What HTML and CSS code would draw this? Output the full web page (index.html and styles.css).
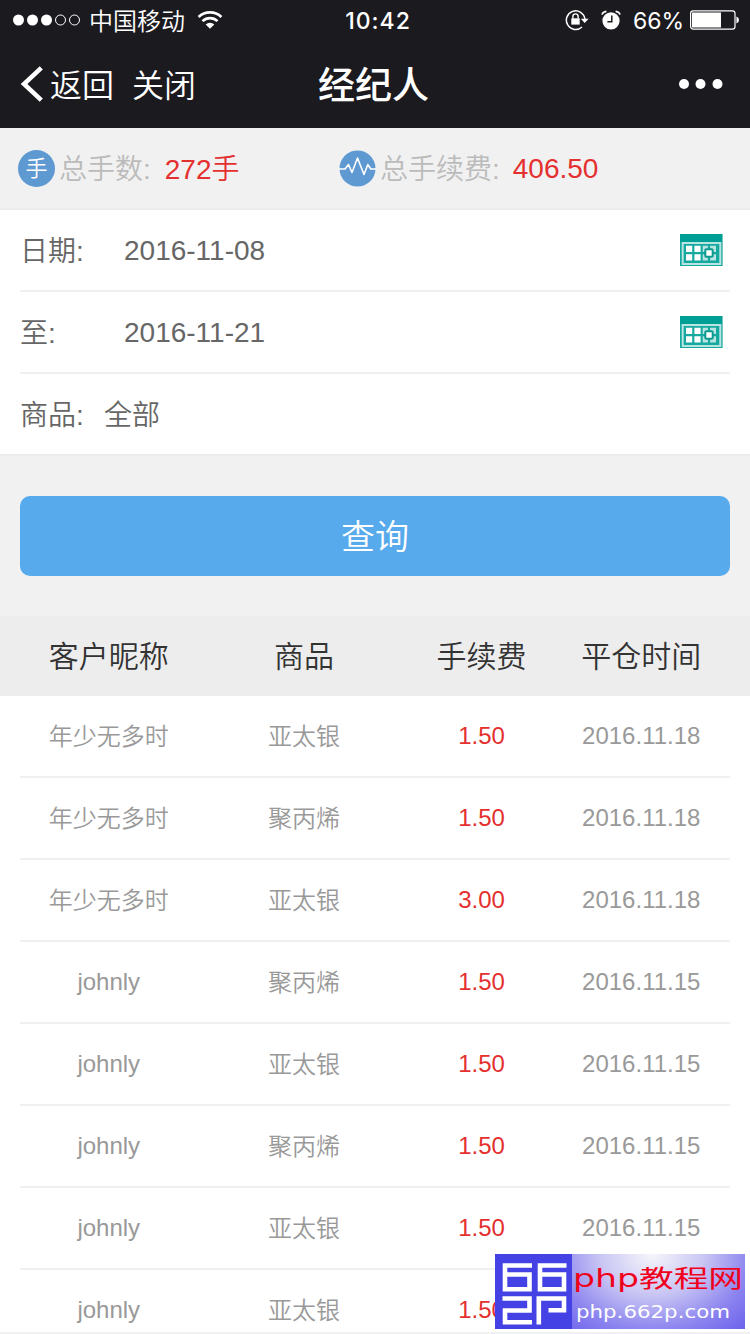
FILE: index.html
```html
<!DOCTYPE html>
<html lang="zh-CN">
<head>
  <meta charset="UTF-8" />
  <meta name="viewport" content="width=device-width, initial-scale=1.0"/>
  <title>经纪人</title>
  <link rel="stylesheet" href="styles.css">
</head>
<body>

<!-- Top bars -->
<header>
  <div class="status-bar">
    <div class="status-left">
      <svg class="signal" width="70" height="14" viewBox="0 0 70 14">
        <g fill="#fff">
          <circle cx="6.5" cy="7" r="5.5"/>
          <circle cx="20.5" cy="7" r="5.5"/>
          <circle cx="34.5" cy="7" r="5.5"/>
        </g>
        <g fill="none" stroke="#fff">
          <circle cx="48.5" cy="7" r="5"/>
          <circle cx="62.5" cy="7" r="5"/>
        </g>
      </svg>
      <span class="carrier">中国移动</span>
      <svg class="wifi" width="26" height="20" viewBox="0 0 26 20">
        <g fill="none" stroke="#fff" stroke-width="2.7">
          <path d="M1.6 6.9a16.5 16.5 0 0 1 22.8 0"/>
          <path d="M5.5 11.1a10.8 10.8 0 0 1 15 0"/>
        </g>
        <path fill="#fff" d="M8.7 14.4a6.2 6.2 0 0 1 8.6 0L13 18.8z"/>
      </svg>
    </div>
    <span class="clock">10:42</span>
    <div class="status-right">
      <svg class="lock" width="24" height="22" viewBox="0 0 24 22">
        <path fill="none" stroke="#fff" stroke-width="1.5" d="M17 18A9.3 9.3 0 1 1 19.9 10"/>
        <path fill="#fff" d="M15.8 9.7h7.8L19.7 14z"/>
        <path fill="#fff" d="M6.3 9.3h8.4v6.3H6.3z"/>
        <path fill="none" stroke="#fff" stroke-width="1.4" d="M7.9 9.6V7.5a2.6 2.6 0 0 1 5.2 0v2.1"/>
      </svg>
      <svg class="alarm" width="20" height="20" viewBox="0 0 20 20">
        <circle cx="10" cy="10.8" r="8.6" fill="#fff"/>
        <path fill="none" stroke="#fff" stroke-width="1.6" d="M1 4.6Q1.8 1.8 5.4 1.4M19 4.6Q18.2 1.8 14.6 1.4"/>
        <path fill="none" stroke="#1b1a1f" stroke-width="1.5" d="M10.8 5.6v6.2H6.4"/>
      </svg>
      <span class="percent">66%</span>
      <svg class="battery" width="50" height="20" viewBox="0 0 50 20">
        <rect x=".6" y=".9" width="44.4" height="18.2" rx="2.6" fill="none" stroke="#fff" stroke-width="1.2"/>
        <path fill="#fff" d="M2 2.6h29v14.8H2zM46.4 6.6q2.6.6 2.6 3.4t-2.6 3.4z"/>
      </svg>
    </div>
  </div>
  <div class="nav-bar">
    <div class="nav-left">
      <svg width="24" height="36" viewBox="0 0 24 36">
        <path fill="none" stroke="#fff" stroke-width="4.500" d="M22.300 1.800L5 18l17.300 16.200"/>
      </svg>
      <a class="back">返回</a>
      <a class="close">关闭</a>
    </div>
    <h1>经纪人</h1>
    <svg class="more" width="44" height="10" viewBox="0 0 44 10">
      <g fill="#fff">
        <circle cx="5" cy="5" r="5"/>
        <circle cx="21.5" cy="5" r="5"/>
        <circle cx="38.5" cy="5" r="5"/>
      </g>
    </svg>
  </div>
</header>

<!-- Totals -->
<div class="summary">
  <div class="total">
    <span class="hand-icon">手</span>
    <span class="label">总手数:</span>
    <span class="value hands">272手</span>
  </div>
  <div class="total">
    <svg class="wave-icon" width="37" height="37" viewBox="0 0 37 37">
      <circle cx="18.5" cy="18.500" r="18" fill="#5e99d2"/>
      <path fill="none" stroke="#fff" stroke-width="1.600" stroke-linejoin="round" d="M0 19h6l3.500-4.500 3.500 8 5.500-14.500L25 24.500l3.800-10 3 4.500H37"/>
    </svg>
    <span class="label">总手续费:</span>
    <span class="value">406.50</span>
  </div>
</div>

<!-- Filter form -->
<div class="filters">
  <div class="field">
    <span class="name">日期:</span>
    <span class="date">2016-11-08</span>
    <svg class="calendar" width="43" height="32" viewBox="0 0 43 32"><use href="#cal"/></svg>
  </div>
  <div class="field">
    <span class="name">至:</span>
    <span class="date">2016-11-21</span>
    <svg class="calendar" width="43" height="32" viewBox="0 0 43 32"><use href="#cal"/></svg>
  </div>
  <div class="field">
    <span class="name">商品:</span>
    <span class="goods">全部</span>
  </div>
</div>

<button class="query">查询</button>

<!-- Records -->
<div class="table-head row">
  <span>客户昵称</span><span>商品</span><span>手续费</span><span>平仓时间</span>
</div>
<div class="records" id="records"></div>

<!-- Site badge -->
<div class="badge">
  <svg class="badge-logo" width="77" height="75" viewBox="0 0 77 75">
    <g fill="none" stroke="#fff" stroke-width="4.600">
      <path d="M37 11.500H10V35.200H34.500V20.500H10"/>
      <path d="M71.500 11.500H45V35.200H69V20.500H45"/>
      <path d="M7.500 44.500H34.500V56.500H10V68.300H37"/>
      <path d="M43.800 70.500V44.500H69V56.300H53.500"/>
    </g>
  </svg>
  <div class="badge-text">
    <svg width="173" height="75" viewBox="0 0 173 75">
      <text class="badge-title" x="1" y="33" textLength="170" lengthAdjust="spacingAndGlyphs">php教程网</text>
      <text class="badge-url" x="4" y="64" textLength="154" lengthAdjust="spacingAndGlyphs">php.662p.com</text>
    </svg>
  </div>
</div>

<svg class="defs" width="0" height="0">
  <symbol id="cal" viewBox="0 0 43 32">
    <path fill="#76c9c3" d="M0 0h43v32H0z"/>
    <path fill="#009f95" d="M0 0h42v8H0z"/>
    <path fill="#16a99f" d="M0 8h42v24H0z"/>
    <path fill="none" stroke="#b8e5e1" stroke-width="2" d="M2.700 9h37.600v21H2.700z"/>
    <path fill="#fff" d="M6 11.700h6.200v6.300H6zM14.400 11.700h6.200v6.300h-6.200zM6 20.300h6.200v6.300H6zM14.400 20.300h6.200v6.300h-6.200z"/>
    <path fill="#b8e5e1" d="M22.700 11.700h5.200v6.300h-5.200zM30.100 11.700h5.900v6.300h-5.900zM22.700 20.300h5.200v6.300h-5.200zM30.100 20.300h5.900v6.300h-5.900z"/>
    <rect x="25.300" y="15.300" width="7.400" height="7.400" rx="1" fill="#fff" stroke="#0c9a90" stroke-width="2"/>
  </symbol>
</svg>

<script>
  const records = [
    { name: "年少无多时", goods: "亚太银", fee: "1.50", date: "2016.11.18" },
    { name: "年少无多时", goods: "聚丙烯", fee: "1.50", date: "2016.11.18" },
    { name: "年少无多时", goods: "亚太银", fee: "3.00", date: "2016.11.18" },
    { name: "johnly", goods: "聚丙烯", fee: "1.50", date: "2016.11.15" },
    { name: "johnly", goods: "亚太银", fee: "1.50", date: "2016.11.15" },
    { name: "johnly", goods: "聚丙烯", fee: "1.50", date: "2016.11.15" },
    { name: "johnly", goods: "亚太银", fee: "1.50", date: "2016.11.15" },
    { name: "johnly", goods: "亚太银", fee: "1.50", date: "" },
  ];

  // Chinese glyphs sit lower in the line than latin ones
  const cell = text => `<span class="${/[\u4e00-\u9fff]/.test(text) ? "zh" : ""}">${text}</span>`;

  document.getElementById("records").innerHTML = records.map(r => `
    <div class="row record">
      ${cell(r.name)}${cell(r.goods)}<span class="fee">${r.fee}</span>${cell(r.date)}
    </div>
  `).join("");
</script>

</body>
</html>
```
FILE: styles.css
```css
:root {
  --red: #e4302f;
  --line: #f0f0f0;
}

* {
  box-sizing: border-box;
}

body {
  margin: 0;
  height: 1334px;
  overflow: hidden;
  display: flex;
  flex-direction: column;
  position: relative;
  background: #f1f1f1;
  font-family: "Liberation Sans", "Noto Sans CJK SC", sans-serif;
  font-weight: 350;
}

svg {
  display: block;
  flex: none;
}

header {
  height: 128px;
  flex: none;
  background: #1b1a1f;
  color: #fff;
}

.status-bar {
  height: 40px;
  display: grid;
  grid-template-columns: 1fr auto 1fr;
  align-items: center;
  padding: 0 10px 0 12px;
}

.status-left,
.status-right {
  display: flex;
  align-items: center;
}

.status-right {
  justify-content: flex-end;
}

.carrier {
  margin-left: 7px;
  padding-top: 3px;
  font-size: 24px;
  line-height: 37px;
}

.wifi {
  margin-left: 12px;
}

.clock {
  padding: 1px 0 0 4px;
  font-family: Inter, sans-serif;
  font-size: 23px;
  font-weight: 500;
  letter-spacing: 1px;
}

.alarm {
  margin: 0 12px;
}

.percent {
  padding-top: 1px;
  font-family: Inter, sans-serif;
  font-size: 23px;
  font-weight: 400;
  margin-right: 6px;
}

.nav-bar {
  height: 88px;
  display: grid;
  grid-template-columns: 1fr auto 1fr;
  align-items: center;
  padding: 0 27px 0 19px;
}

.nav-left {
  display: flex;
  align-items: center;
  font-size: 32px;
}

.back,
.close {
  padding-bottom: 2px;
}

.back {
  margin-left: 7px;
}

.close {
  margin-left: 18px;
}

h1 {
  margin: 0;
  padding: 0 0 3px 5px;
  font-size: 37px;
  font-weight: 500;
}

.more {
  justify-self: end;
}

.summary {
  height: 82px;
  flex: none;
  display: grid;
  grid-template-columns: 321px 1fr;
  padding-left: 18px;
  border-bottom: 2px solid #ececec;
  font-size: 28px;
}

.total {
  display: flex;
  align-items: center;
}

.hand-icon {
  width: 37px;
  height: 37px;
  border-radius: 50%;
  background: #5e99d2;
  color: #fff;
  font-size: 22px;
  line-height: 37px;
  text-align: center;
}

.label {
  margin-left: 4px;
  padding-bottom: 2px;
  color: #bbb;
}

.value {
  margin-left: 13px;
  padding-top: 1px;
  color: var(--red);
}

.hands {
  margin-left: 14px;
  padding: 0 0 3px;
}

.filters {
  flex: none;
  padding: 0 20px;
  background: #fff;
  border-bottom: 2px solid #ececec;
  color: #666;
  font-size: 28px;
}

.field {
  height: 82px;
  display: flex;
  align-items: center;
  border-bottom: 2px solid var(--line);
}

.field:last-child {
  height: 80px;
  border-bottom: none;
}

.date {
  flex: 1;
  padding-top: 2px;
}

.name {
  width: 104px;
}

.name,
.goods {
  padding-bottom: 3px;
}

.goods {
  margin-left: -20px;
}

.calendar {
  margin-right: 7px;
}

.query {
  flex: none;
  height: 80px;
  margin: 40px 20px;
  padding: 0 0 4px;
  border: none;
  border-radius: 10px;
  background: #57aaeb;
  color: #fff;
  font: inherit;
  font-size: 34px;
}

.row {
  flex: none;
  height: 82px;
  display: grid;
  grid-template-columns: 25% 30% 20% 25%;
  align-items: center;
  text-align: center;
}

.table-head {
  height: 80px;
  padding: 0 20px 4px;
  background: #ededed;
  color: #333;
  font-size: 30px;
}

.records {
  height: 636px;
  flex: none;
  overflow: hidden;
  padding: 0 20px;
  background: #fff;
}

.record {
  border-bottom: 2px solid var(--line);
  color: #999;
  font-size: 24px;
}

.zh {
  padding-bottom: 4px;
}

.fee {
  color: var(--red);
}

.badge {
  position: absolute;
  right: 5px;
  bottom: 5px;
  width: 250px;
  height: 75px;
  display: flex;
}

.badge-logo {
  background: #4442e4;
}

.badge-text {
  background: radial-gradient(ellipse 115px 90px at 80px 0, #f6f6fb 0%, #c9c6f4 45%, #8c84ef 85%, #5d52ec 130%);
}

.badge-title {
  fill: #f0001c;
  font-family: "DejaVu Sans", "Noto Sans CJK SC", sans-serif;
  font-size: 24px;
  font-weight: 400;
}

.badge-url {
  fill: #fff;
  font-family: "DejaVu Sans", sans-serif;
  font-size: 18px;
  font-weight: 400;
}

.defs {
  position: absolute;
}
```
